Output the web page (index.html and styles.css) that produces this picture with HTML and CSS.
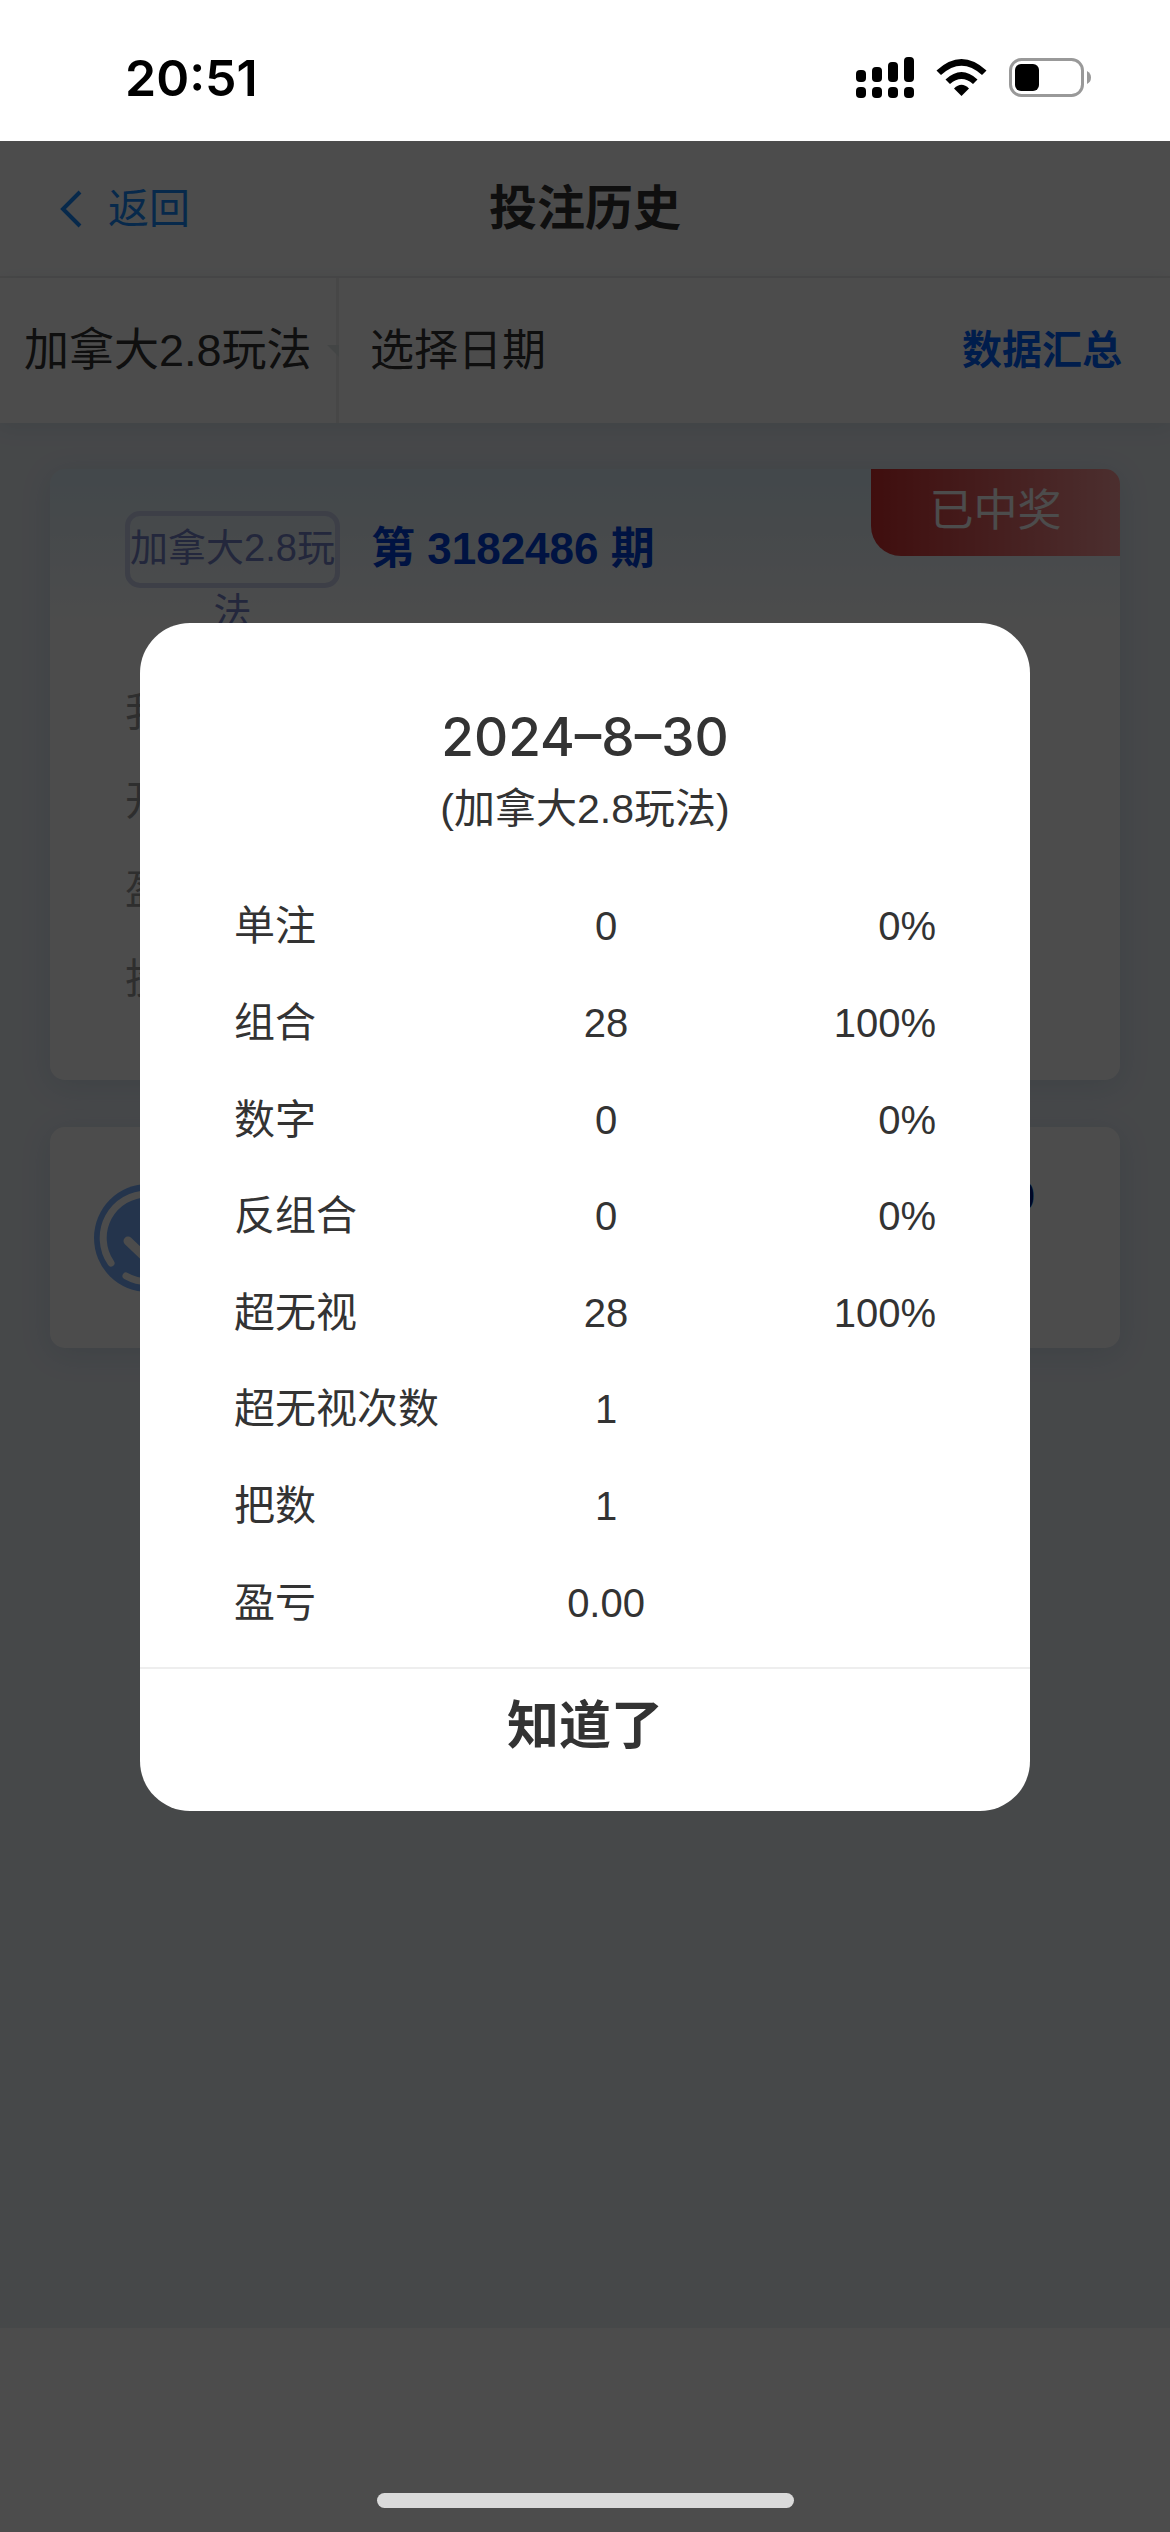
FILE: index.html
```html
<!DOCTYPE html>
<html lang="zh-CN">
<head>
<meta charset="utf-8">
<meta name="viewport" content="width=device-width, initial-scale=1">
<title>投注历史</title>
<link rel="stylesheet" href="styles.css">
</head>
<body>
<div class="status-bar">
  <time class="clock">20:51</time>
  <svg class="status-icons" width="236" height="42" viewBox="0 0 236 42" aria-hidden="true">
    <g>
      <rect x="0" y="13" width="10" height="12" rx="4"/>
      <rect x="16" y="10" width="10" height="15" rx="4"/>
      <rect x="32" y="5" width="10" height="20" rx="4"/>
      <rect x="48" y="0" width="10" height="25" rx="4"/>
      <rect x="0" y="30" width="10" height="11" rx="4"/>
      <rect x="16" y="30" width="10" height="11" rx="4"/>
      <rect x="32" y="30" width="10" height="11" rx="4"/>
      <rect x="48" y="30" width="10" height="11" rx="4"/>
    </g>
    <path d="M80.500 13.500Q105.500-9.500 130.500 13.500L126 18Q105.500-.500 85 18Z"/>
    <path d="M89.500 22.500Q105.500 7.500 121.500 22.500L117 27Q105.500 17 94 27Z"/>
    <path d="M98 31.500Q105.500 24 113 31.500L105.500 39Z"/>
    <rect x="154.500" y="2.500" width="72" height="36" rx="11" fill="none" stroke="#999" stroke-width="3"/>
    <rect x="159" y="7" width="24" height="27" rx="6"/>
    <path d="M231 14Q235 16 235 20.500T231 27Z" fill="#999"/>
  </svg>
</div>
<div class="screen">
  <header class="nav">
    <a class="back" href="#"><svg width="22" height="38" viewBox="0 0 22 38" aria-hidden="true"><path d="M20 2L3 19L20 36" fill="none" stroke="currentColor" stroke-width="4"/></svg>返回</a>
    <h1>投注历史</h1>
  </header>
  <div class="filters">
    <div class="game">
      <select aria-label="玩法"><option>加拿大2.8玩法</option></select>
      <svg width="24" height="12" viewBox="0 0 24 12" aria-hidden="true"><path d="M0 0H24L12 12Z" fill="#e2e8e8"/></svg>
    </div>
    <input class="date" type="text" placeholder="选择日期" aria-label="选择日期">
    <button class="summary" type="button">数据汇总</button>
  </div>
  <main>
    <section class="card bet">
      <div class="bet-head">
        <span class="tag">加拿大2.8玩法</span>
        <h2>第 3182486 期</h2>
        <span class="ribbon">已中奖</span>
      </div>
      <ul>
        <li>我</li>
        <li>开</li>
        <li>盈</li>
        <li>投</li>
      </ul>
    </section>
    <section class="card total">
      <svg width="108" height="108" viewBox="0 0 108 108" aria-hidden="true">
        <circle cx="54" cy="54" r="54" fill="#78b0ff"/>
        <path d="M54 10A44 44 0 0 0 17 79M32 92A45 45 0 0 0 76 92" fill="none" stroke="#fff" stroke-width="7" stroke-linecap="round"/>
        <path d="M34 57L54 76L78 44" fill="none" stroke="#fff" stroke-width="9" stroke-linecap="round"/>
      </svg>
      <strong>0</strong>
    </section>
  </main>
</div>
<div class="overlay">
  <div class="dialog" role="dialog" aria-modal="true" aria-labelledby="summary-date">
    <h2 id="summary-date">2024–8–30</h2>
    <p>(加拿大2.8玩法)</p>
    <table>
      <tbody>
        <tr><th scope="row">单注</th><td>0</td><td>0%</td></tr>
        <tr><th scope="row">组合</th><td>28</td><td>100%</td></tr>
        <tr><th scope="row">数字</th><td>0</td><td>0%</td></tr>
        <tr><th scope="row">反组合</th><td>0</td><td>0%</td></tr>
        <tr><th scope="row">超无视</th><td>28</td><td>100%</td></tr>
        <tr><th scope="row">超无视次数</th><td>1</td><td></td></tr>
        <tr><th scope="row">把数</th><td>1</td><td></td></tr>
        <tr><th scope="row">盈亏</th><td>0.00</td><td></td></tr>
      </tbody>
    </table>
    <button class="confirm" type="button">知道了</button>
  </div>
  <div class="home-bar"></div>
</div>
</body>
</html>
```
FILE: styles.css
```css
* { box-sizing: border-box; }

body {
  margin: 0;
  min-height: 100vh;
  display: flex;
  flex-direction: column;
  background: #fff;
  color: #333;
  font-family: "Liberation Sans", "Noto Sans CJK SC", sans-serif;
  font-size: 41px;
}

h1, h2, p, ul { margin: 0; padding: 0; }
ul { list-style: none; }
svg { display: block; flex: none; }

button, input, select {
  margin: 0;
  padding: 0;
  border: 0;
  border-radius: 0;
  background: none;
  color: inherit;
  font: inherit;
  appearance: none;
}

.status-bar {
  height: 141px;
  padding: 14px 78px 0 125px;
  display: flex;
  align-items: center;
  justify-content: space-between;
}
.clock {
  color: #000;
  font: 600 50px/60px Inter, sans-serif;
}

.screen {
  flex: 1;
  display: flex;
  flex-direction: column;
  padding-bottom: 204px;
}

.nav {
  height: 137px;
  padding: 0 60px;
  display: grid;
  grid-template-columns: 1fr auto 1fr;
  align-items: center;
  border-bottom: 2px solid #eee;
}
.nav h1 { font-size: 48px; line-height: 60px; font-weight: 700; }
.back {
  display: flex;
  align-items: center;
  gap: 26px;
  color: #1989fa;
  line-height: 60px;
  text-decoration: none;
}

.filters {
  position: relative;
  height: 145px;
  padding-right: 48px;
  display: flex;
  align-items: stretch;
  font-size: 44px;
  box-shadow: 0 4px 20px rgba(60, 110, 150, .12);
}
.game {
  width: 339px;
  padding-left: 24px;
  display: flex;
  align-items: center;
  gap: 15px;
  overflow: hidden;
  box-shadow: inset -3px 0 #eee;
  font-size: 45px;
}
.game select { width: 288px; height: 60px; flex: none; }
.date { flex: 1; min-width: 0; padding-left: 31px; }
.date::placeholder { color: #333; opacity: 1; }
.summary {
  padding-bottom: 2px;
  color: #0062ff;
  font-size: 40px;
  font-weight: 700;
  line-height: 60px;
}

main {
  flex: 1;
  padding: 46px 50px;
  display: flex;
  flex-direction: column;
  gap: 47px;
  background: #ebf0f5;
}
.card {
  background: #fff;
  border-radius: 15px;
  box-shadow: 0 6px 30px rgba(60, 120, 180, .16);
}

.bet {
  height: 611px;
  overflow: hidden;
  background: linear-gradient(#dff0fa, #fff 160px);
}
.bet-head {
  height: 199px;
  padding-left: 75px;
  display: flex;
  align-items: flex-start;
}
.tag {
  width: 215px;
  height: 77px;
  margin-top: 42px;
  border: 5px solid #cbd3ef;
  border-radius: 15px;
  color: #7582c8;
  font-size: 38px;
  line-height: 64px;
  text-align: center;
  word-break: break-all;
}
.bet-head h2 {
  margin: 50px 0 0 31px;
  color: #0042dc;
  font-size: 44px;
  line-height: 60px;
}
.ribbon {
  width: 249px;
  height: 87px;
  margin-left: auto;
  border-bottom-left-radius: 30px;
  background: linear-gradient(90deg, #d53030, #fd9d9d);
  color: #fff;
  font-size: 44px;
  line-height: 84px;
  text-align: center;
}
.bet ul { padding-left: 75px; color: #999; line-height: 89px; }

.total {
  height: 221px;
  padding: 0 85px 0 44px;
  display: flex;
  align-items: center;
  justify-content: space-between;
}
.total strong {
  align-self: flex-start;
  margin-top: 42px;
  color: #001a80;
  line-height: 54px;
}

.overlay {
  position: absolute;
  inset: 141px 0 0;
  padding: 482px 140px 24px;
  display: flex;
  flex-direction: column;
  align-items: center;
  justify-content: space-between;
  background: rgba(0, 0, 0, .7);
}
.dialog {
  width: 100%;
  padding-top: 81px;
  border-radius: 50px;
  background: #fff;
  text-align: center;
}
.dialog h2 { font: 500 53px/66px Inter, sans-serif; }
.dialog p { line-height: 78px; }
.dialog table {
  width: calc(100% - 188px);
  height: 773px;
  margin: 30px 94px 16px;
  border-collapse: collapse;
  table-layout: fixed;
  line-height: 60px;
}
.dialog th, .dialog td { padding: 0; }
.dialog th { width: 43%; font-weight: 400; text-align: left; }
.dialog td { width: 20%; font-size: 40px; }
.dialog td:last-child { width: 37%; text-align: right; }
.confirm {
  width: 100%;
  height: 144px;
  padding-bottom: 28px;
  border-top: 2px solid #eee;
  font-size: 52px;
  font-weight: 700;
  line-height: 60px;
}
.home-bar {
  width: 417px;
  height: 15px;
  border-radius: 8px;
  background: #dadada;
}
```
